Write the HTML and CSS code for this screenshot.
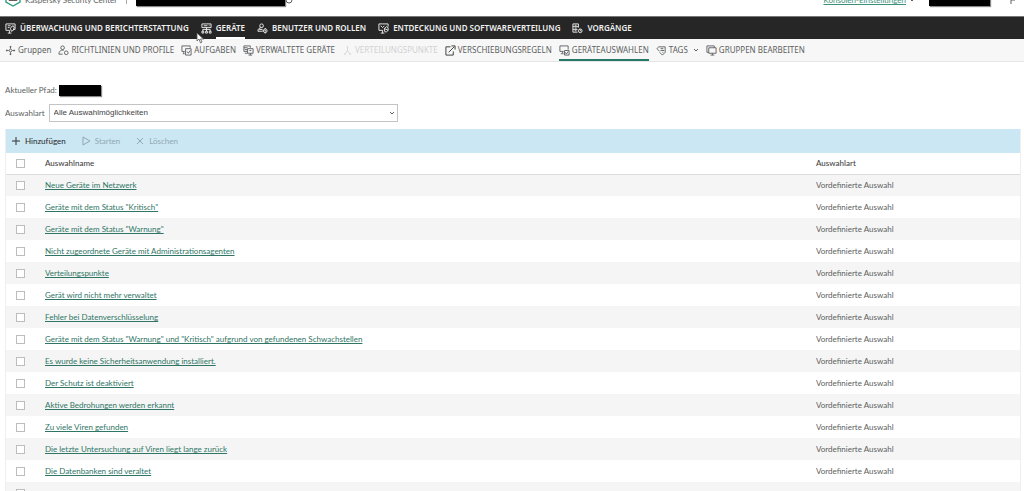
FILE: index.html
```html
<!DOCTYPE html>
<html lang="de">
<head>
<meta charset="utf-8">
<title>Kaspersky Security Center</title>
<link rel="stylesheet" href="styles.css">
</head>
<body>
<header class="brandbar">
  <svg class="logo" viewBox="0 0 16 18" fill="none"><path d="M1 4v9l7 4 7-4V4" stroke="#2f9c7d" stroke-width="1.4"/><path d="M4 6v5.500h8V6M5 9.500h6" stroke="#6b5a5a"/></svg>
  <span class="brand">Kaspersky Security Center</span>
  <span class="divider"></span>
  <span class="redacted server"></span>
  <svg class="refresh" viewBox="0 0 8 8" fill="none" stroke="#777"><circle cx="4" cy="4" r="3"/></svg>
  <a class="console" href="#">Konsolen-Einstellungen</a>
  <svg class="caret" viewBox="0 0 6 4" fill="none" stroke="#777"><path d="M1 1l2 2 2-2"/></svg>
  <span class="redacted user"></span>
  <svg class="flag" viewBox="0 0 6 8" fill="none" stroke="#777"><path d="M1 8V1h4v3H1"/></svg>
</header>

<nav class="mainnav">
  <a href="#"><svg viewBox="0 0 12 12"><path d="M1 1h10v6H9M5 8H1V1M3 3h3M3 5h2M3 11h4M5 8v3"/><path d="M6 6l1-2 2-1 1 2-1 3-2 1z"/></svg>Überwachung und Berichterstattung</a>
  <a href="#" class="active"><svg viewBox="0 0 12 12"><path d="M1 1h10v4H1zM3 3h4M8.500 3h1M6 5v2M2 9V7h8v2M6 7v2M1 9h2v2H1zM5 9h2v2H5zM9 9h2v2H9z"/></svg><span>Geräte</span></a>
  <a href="#"><svg viewBox="0 0 12 12"><circle cx="5" cy="3" r="2"/><path d="M1 9c0-3 2-4 4-4M1 9h5M2 7h4"/><circle cx="9" cy="8.500" r="2"/><circle cx="9" cy="8.500" r=".5"/><path d="M9 5.500v1M9 10.500v1M6 8.500h1"/></svg>Benutzer und Rollen</a>
  <a href="#"><svg viewBox="0 0 12 12"><path d="M5 8H1V1h10v3M3 11h4M5 8v3M3 3l2 2 2-2"/><path d="M7 6l2-2 2 1v3L9 10 7 9zM7 6l4 2"/></svg>Entdeckung und Softwareverteilung</a>
  <a href="#"><svg viewBox="0 0 12 12"><path d="M6 10H1V1h6v4M1 4h6M1 7h5M3 2.500h2M3 5.500h2M3 8.500h2"/><circle cx="9" cy="8.500" r="2"/><path d="M9 7v1.500h1"/></svg>Vorgänge</a>
</nav>

<nav class="subnav">
  <a href="#" class="groups"><svg viewBox="0 0 12 12"><path d="M6 1v3M6 8v3M1 6h3M8 6h3M5 2h2M5 10h2M2 5v2M10 5v2"/><circle cx="6" cy="6" r="1.500"/></svg>Gruppen</a>
  <a href="#" class="policies"><svg viewBox="0 0 12 12"><circle cx="5" cy="3" r="2"/><path d="M1 10c0-3 2-5 5-4M1 10h4"/><circle cx="9" cy="8.500" r="2"/></svg>Richtlinien und Profile</a>
  <a href="#" class="tasks"><svg viewBox="0 0 12 12"><path d="M4 7H1V1h9v2M2 9.500h2M5 4h6v7H5zM6.500 7l1.500 2 2-3M3 7v2"/></svg>Aufgaben</a>
  <a href="#" class="managed"><svg viewBox="0 0 12 12"><path d="M5 7H1V1h7v2M1 3h4M2 5h3M2 9h3M5 4h6v5H5zM8 9v2M6 11h4M7 6h2"/></svg>Verwaltete Geräte</a>
  <a href="#" class="points disabled"><svg viewBox="0 0 12 12"><path d="M6 2v4M6 6l-3 4M6 6l3 4M2 10h2M8 10h2M5 2h2"/></svg>Verteilungspunkte</a>
  <a href="#" class="rules"><svg viewBox="0 0 12 12"><path d="M6 2H1v9h8V7M4 8l6-6M7 1h4v4"/></svg>Verschiebungsregeln</a>
  <a href="#" class="active"><svg viewBox="0 0 12 12"><path d="M5 7H1V1h9v4M2 9.500h3M4 7v2"/><path d="M6 6h5v5H6zM7 8l1 2 2-3"/></svg>Geräteauswahlen</a>
  <a href="#" class="tags"><svg viewBox="0 0 12 12"><path d="M3 2h7v6l-3 3-3-3M3 2L1 4l3 3M5 4h3M5 6h4M7 8h1"/></svg>Tags<svg class="caret" viewBox="0 0 6 4"><path d="M1 1l2 2 2-2"/></svg></a>
  <a href="#" class="edit"><svg viewBox="0 0 12 12"><path d="M3 8H1V1h8v2M3 3h8v6H3zM7 9v2M5 11h4"/></svg>Gruppen bearbeiten</a>
</nav>

<main class="content">
  <div class="path"><span>Aktueller Pfad:</span><span class="redacted crumb"></span></div>
  <div class="filter">
    <label for="kind">Auswahlart</label>
    <div class="selectbox">
      <select id="kind"><option>Alle Auswahlmöglichkeiten</option></select>
      <svg class="caret" viewBox="0 0 6 4"><path d="M1 1l2 2 2-2"/></svg>
    </div>
  </div>
  <section class="panel">
    <div class="toolbar">
      <button type="button" class="add"><svg viewBox="0 0 10 10"><path d="M5 1v8M1 5h8"/></svg>Hinzufügen</button>
      <button type="button" class="start" disabled><svg viewBox="0 0 10 10"><path d="M2 1l7 4-7 4z"/></svg>Starten</button>
      <button type="button" disabled><svg viewBox="0 0 10 10"><path d="M2 2l6 6M8 2L2 8"/></svg>Löschen</button>
    </div>
    <table>
      <thead><tr><th class="check"><input type="checkbox" aria-label="Alle auswählen"></th><th class="name">Auswahlname</th><th class="type">Auswahlart</th></tr></thead>
      <tbody>
        <tr><td><input type="checkbox" aria-labelledby="s1"></td><td><a id="s1" href="#">Neue Geräte im Netzwerk</a></td><td>Vordefinierte Auswahl</td></tr>
        <tr><td><input type="checkbox" aria-labelledby="s2"></td><td><a id="s2" href="#">Geräte mit dem Status "Kritisch"</a></td><td>Vordefinierte Auswahl</td></tr>
        <tr><td><input type="checkbox" aria-labelledby="s3"></td><td><a id="s3" href="#">Geräte mit dem Status "Warnung"</a></td><td>Vordefinierte Auswahl</td></tr>
        <tr><td><input type="checkbox" aria-labelledby="s4"></td><td><a id="s4" href="#">Nicht zugeordnete Geräte mit Administrationsagenten</a></td><td>Vordefinierte Auswahl</td></tr>
        <tr><td><input type="checkbox" aria-labelledby="s5"></td><td><a id="s5" href="#">Verteilungspunkte</a></td><td>Vordefinierte Auswahl</td></tr>
        <tr><td><input type="checkbox" aria-labelledby="s6"></td><td><a id="s6" href="#">Gerät wird nicht mehr verwaltet</a></td><td>Vordefinierte Auswahl</td></tr>
        <tr><td><input type="checkbox" aria-labelledby="s7"></td><td><a id="s7" href="#">Fehler bei Datenverschlüsselung</a></td><td>Vordefinierte Auswahl</td></tr>
        <tr><td><input type="checkbox" aria-labelledby="s8"></td><td><a id="s8" href="#">Geräte mit dem Status "Warnung" und "Kritisch" aufgrund von gefundenen Schwachstellen</a></td><td>Vordefinierte Auswahl</td></tr>
        <tr><td><input type="checkbox" aria-labelledby="s9"></td><td><a id="s9" href="#">Es wurde keine Sicherheitsanwendung installiert.</a></td><td>Vordefinierte Auswahl</td></tr>
        <tr><td><input type="checkbox" aria-labelledby="s10"></td><td><a id="s10" href="#">Der Schutz ist deaktiviert</a></td><td>Vordefinierte Auswahl</td></tr>
        <tr><td><input type="checkbox" aria-labelledby="s11"></td><td><a id="s11" href="#">Aktive Bedrohungen werden erkannt</a></td><td>Vordefinierte Auswahl</td></tr>
        <tr><td><input type="checkbox" aria-labelledby="s12"></td><td><a id="s12" href="#">Zu viele Viren gefunden</a></td><td>Vordefinierte Auswahl</td></tr>
        <tr><td><input type="checkbox" aria-labelledby="s13"></td><td><a id="s13" href="#">Die letzte Untersuchung auf Viren liegt lange zurück</a></td><td>Vordefinierte Auswahl</td></tr>
        <tr><td><input type="checkbox" aria-labelledby="s14"></td><td><a id="s14" href="#">Die Datenbanken sind veraltet</a></td><td>Vordefinierte Auswahl</td></tr>
        <tr><td><input type="checkbox" aria-label="Weitere Auswahl"></td><td></td><td></td></tr>
      </tbody>
    </table>
  </section>
</main>
<svg class="pointer" viewBox="0 0 8 12"><path d="M1 1v8l2-2 1.500 4 1.500-1-1.500-3h3z" fill="#fff" stroke="#555" stroke-width=".8"/></svg>
</body>
</html>
```
FILE: styles.css
```css
* { box-sizing: border-box; }
html, body { height: 100%; }
body {
  margin: 0;
  overflow: hidden;
  background: #fff;
  color: #5c5f61;
  font: 8px/12px Lato, "Open Sans", sans-serif;
}
a { color: inherit; text-decoration: none; }
svg { flex: none; fill: none; stroke: currentColor; }

.brandbar {
  display: flex;
  align-items: flex-end;
  height: 16px;
  padding: 0 8px 0 5px;
  overflow: hidden;
}
.logo { width: 16px; height: 18px; margin-bottom: 9px; }
.brand { margin: 0 9px 10px 4px; white-space: nowrap; }
.divider { width: 1px; height: 10px; margin-bottom: 12px; background: #aaa; }
.redacted { background: #000; box-shadow: 1px 1px 1px #888; }
.server { width: 149px; height: 20px; margin: 0 0 10px 9px; }
.refresh { width: 8px; height: 8px; margin-bottom: 12px; }
.console { margin: 0 3px 10px auto; color: #3c8f79; text-decoration: underline; white-space: nowrap; }
.caret { width: 6px; height: 4px; }
.brandbar .caret { margin: 0 14px 14px 0; }
.user { width: 61px; height: 20px; margin: 0 20px 10px 0; }
.flag { width: 6px; height: 8px; margin-bottom: 12px; }

.mainnav, .subnav {
  display: flex;
  height: 23px;
  padding-left: 5px;
  font-family: "Noto Sans", "Open Sans", sans-serif;
  text-transform: uppercase;
  white-space: nowrap;
}
.mainnav {
  gap: 12px;
  background: #262626;
  border-top: 1px solid #777;
  color: #f2f2f2;
  font-weight: 600;
}
.mainnav a, .subnav a { display: flex; align-items: center; }
.mainnav a { gap: 4px; }
.mainnav svg, .subnav svg { width: 11px; height: 11px; }
.mainnav .active span { display: flex; align-items: center; height: 22px; border-bottom: 2px solid #fff; padding-top: 2px; }

.subnav {
  gap: 7px;
  background: #f7f7f7;
  border-bottom: 1px solid #e6e6e6;
}
.subnav a { gap: 2px; border-bottom: 2px solid transparent; border-top: 2px solid transparent; }
.subnav .caret { width: 6px; height: 4px; margin-left: 3px; }
.subnav .rules svg { color: #333; }
.subnav .groups { text-transform: none; }
.subnav .disabled { color: #d2d2d2; }
.subnav .active { border-bottom-color: #247a67; }

.content { padding: 22px 3px 0 5px; }
.path { display: flex; align-items: center; gap: 2px; height: 12px; }
.crumb { width: 42px; height: 11px; }
.filter { display: flex; align-items: center; gap: 4px; margin-top: 8px; }
.selectbox { position: relative; flex: 0 1 349px; }
.selectbox select {
  appearance: none;
  display: block;
  width: 100%;
  height: 18px;
  padding: 0 4px;
  border: 1px solid #c4c4c4;
  border-radius: 0;
  background: #fff;
  color: #444;
  font: 8px/12px "Liberation Sans", Arial, sans-serif;
}
.selectbox .caret { position: absolute; right: 3px; top: 7px; }

.panel { margin-top: 7px; border-left: 1px solid #eee; border-right: 1px solid #eee; }
.toolbar { display: flex; gap: 15px; height: 24px; padding-left: 5px; background: #cbe7f4; }
.toolbar button {
  display: flex;
  align-items: center;
  gap: 4px;
  padding: 0;
  border: 0;
  background: none;
  color: #333;
  font: inherit;
  font-weight: 500;
}
.toolbar button:disabled { color: #91a8b3; font-weight: 400; }
.toolbar svg { width: 10px; height: 10px; }

table { width: 100%; border-collapse: collapse; table-layout: fixed; }
th, td { height: 22px; padding: 0; text-align: left; white-space: nowrap; }
th { height: 21px; color: #444; font-weight: 500; border-bottom: 1px solid #ddd; }
.check { width: 39px; }
.type { width: 204px; }
tbody tr:nth-child(odd) { background: #f5f5f5; }
td a { color: #2e7565; text-decoration: underline; }
input[type="checkbox"] {
  appearance: none;
  display: block;
  width: 9px;
  height: 9px;
  margin: 0 0 0 10px;
  border: 1px solid #bdbdbd;
  background: #fff;
}
.pointer { position: absolute; left: 196px; top: 32px; width: 8px; height: 12px; }
```
